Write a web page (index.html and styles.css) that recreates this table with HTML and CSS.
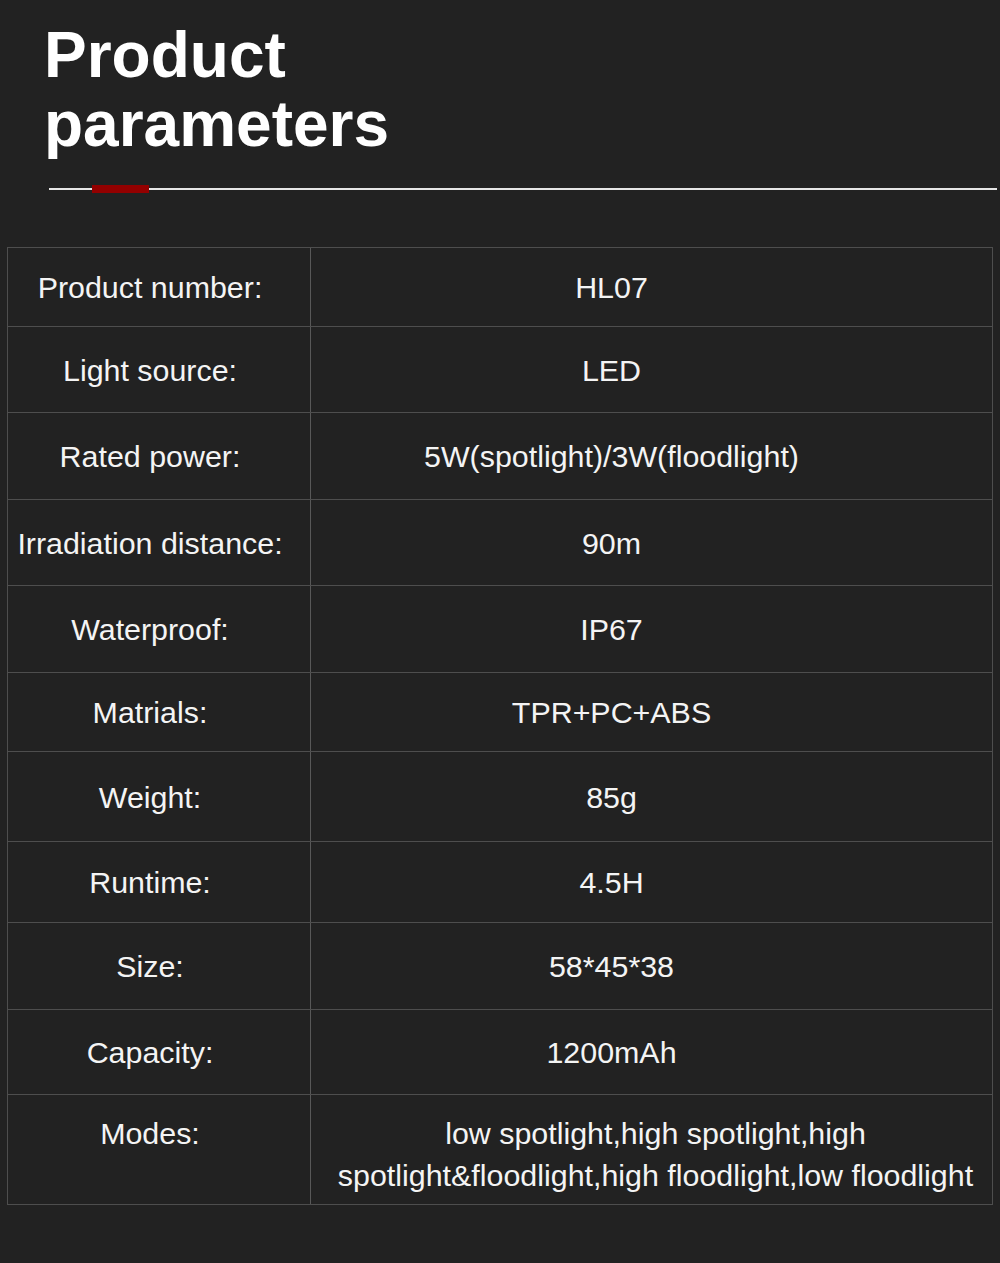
FILE: index.html
```html
<!DOCTYPE html>
<html lang="en">
<head>
<meta charset="utf-8">
<title>Product parameters</title>
<link rel="stylesheet" href="styles.css">
</head>
<body>
<div class="page">
  <h1 class="title">Product<br>parameters</h1>
  <div class="rule"><span class="accent"></span></div>
  <div class="table">
    <div class="row h79"><div class="label">Product number:</div><div class="value">HL07</div></div>
    <div class="row h86"><div class="label">Light source:</div><div class="value">LED</div></div>
    <div class="row h87"><div class="label">Rated power:</div><div class="value">5W(spotlight)/3W(floodlight)</div></div>
    <div class="row h86"><div class="label">Irradiation distance:</div><div class="value">90m</div></div>
    <div class="row h87"><div class="label">Waterproof:</div><div class="value">IP67</div></div>
    <div class="row h79"><div class="label">Matrials:</div><div class="value">TPR+PC+ABS</div></div>
    <div class="row h90"><div class="label">Weight:</div><div class="value">85g</div></div>
    <div class="row h81"><div class="label">Runtime:</div><div class="value">4.5H</div></div>
    <div class="row h87"><div class="label">Size:</div><div class="value">58*45*38</div></div>
    <div class="row h85"><div class="label">Capacity:</div><div class="value">1200mAh</div></div>
    <div class="row h110 top"><div class="label">Modes:</div><div class="value wide">low spotlight,high spotlight,high<br>spotlight&amp;floodlight,high floodlight,low floodlight</div></div>
  </div>
</div>
</body>
</html>
```

FILE: styles.css
```css
html, body {
  margin: 0;
  padding: 0;
  background: #222222;
}
.page {
  width: 1000px;
  height: 1263px;
  background: #222222;
  font-family: "Liberation Sans", Arial, sans-serif;
  color: #f4f4f4;
  overflow: hidden;
}
.title {
  margin: 21px 0 0 44px;
  font-size: 64px;
  line-height: 69px;
  font-weight: bold;
  color: #ffffff;
}
.rule {
  position: relative;
  margin: 29px 3px 0 49px;
  height: 2px;
  background: #e6e6e6;
}
.accent {
  position: absolute;
  left: 43px;
  top: -3px;
  width: 57px;
  height: 8px;
  background: #930000;
}
.table {
  margin: 57px 0 0 7px;
  width: 984px;
  border-top: 1px solid #4e4e4e;
  border-left: 1px solid #4e4e4e;
  border-right: 1px solid #4e4e4e;
}
.row {
  display: grid;
  grid-template-columns: 303px 1fr;
  border-bottom: 1px solid #4e4e4e;
  box-sizing: border-box;
  font-size: 30.4px;
  line-height: 42px;
}
.label, .value {
  display: flex;
  align-items: center;
  justify-content: center;
  text-align: center;
}
.label {
  padding-right: 18px;
  border-right: 1px solid #585858;
}
.value {
  padding-right: 80px;
}
.value.wide {
  padding-right: 0;
  padding-left: 8px;
}
.row.top .label, .row.top .value {
  align-items: flex-start;
  padding-top: 17px;
}
.h79 { height: 79px; }
.h81 { height: 81px; }
.h85 { height: 85px; }
.h86 { height: 86px; }
.h87 { height: 87px; }
.h90 { height: 90px; }
.h110 { height: 110px; }
```
